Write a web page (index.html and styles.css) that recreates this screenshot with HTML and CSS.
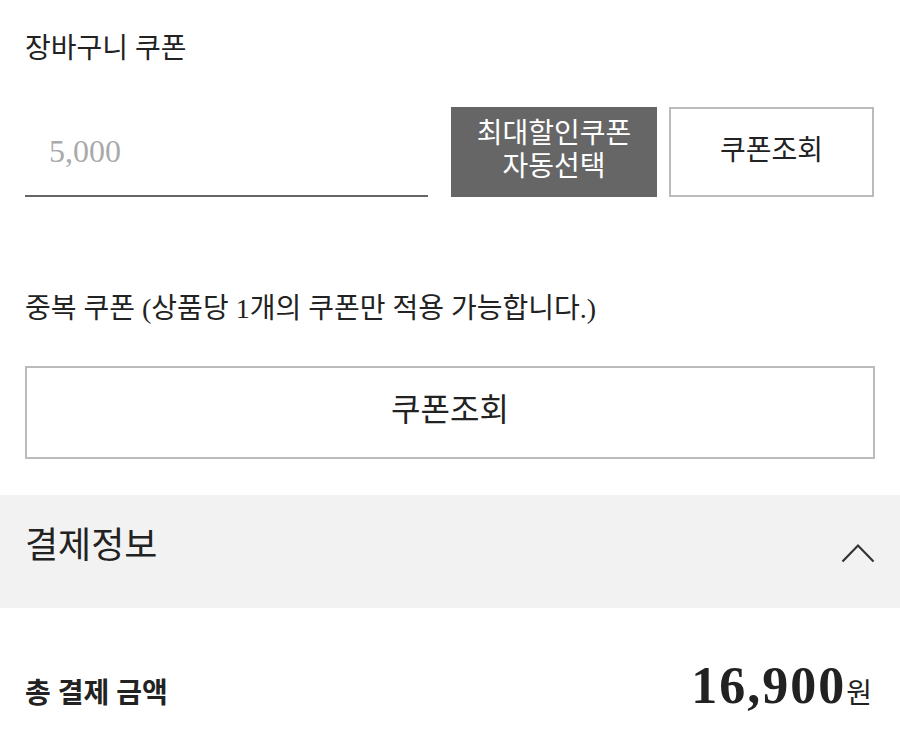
FILE: index.html
```html
<!DOCTYPE html>
<html lang="ko">
  <head>
    <meta charset="utf-8" />
    <meta name="viewport" content="width=device-width, initial-scale=1.0" />
    <title>쿠폰 / 결제정보</title>
    <link rel="stylesheet" href="styles.css">
  </head>
  <body>
    <div class="order-page">
      <section class="coupon-section">
        <h3 class="coupon-label">장바구니 쿠폰</h3>
        <div class="coupon-row">
          <input class="coupon-input" type="text" placeholder="5,000" />
          <button class="btn dark">최대할인쿠폰<br>자동선택</button>
          <button class="btn outline">쿠폰조회</button>
        </div>

        <h3 class="coupon-label dup">중복 쿠폰 (상품당 1개의 쿠폰만 적용 가능합니다.)</h3>
        <button class="btn outline wide">쿠폰조회</button>
      </section>

      <div class="pay-header">
        <h2>결제정보</h2>
        <svg class="chevron" width="34" height="20" viewBox="0 0 34 20" fill="none">
          <path d="M1.5 18.5 L17 2.5 L32.5 18.5" stroke="#333" stroke-width="2.2" />
        </svg>
      </div>

      <div class="total-row">
        <span class="total-label">총 결제 금액</span>
        <span class="total-price">16,900<small>원</small></span>
      </div>
    </div>
  </body>
</html>
```

FILE: styles.css
```css
/* General Reset */
* {
  margin: 0;
  padding: 0;
  box-sizing: border-box;
}

body {
  font-family: "Liberation Serif", "Noto Sans CJK KR", sans-serif;
  background-color: #fff;
  color: #222;
}

/* Coupons */
.coupon-section {
  padding: 31px 25px 0;
}

.coupon-label {
  font-size: 28px;
  font-weight: normal;
  line-height: 36px;
}

.coupon-label.dup {
  margin-top: 94px;
}

.coupon-row {
  display: flex;
  margin-top: 40px;
  height: 90px;
}

.coupon-input {
  width: 403px;
  margin-right: 23px;
  border: none;
  border-bottom: 2px solid #666;
  padding: 0 0 0 24px;
  font-family: "Liberation Serif", serif;
  font-size: 32px;
  color: #333;
  outline: none;
  background: transparent;
}

.coupon-input::placeholder {
  color: #aaa;
}

.btn {
  font-family: "Liberation Serif", "Noto Sans CJK KR", sans-serif;
  font-size: 28px;
  line-height: 33px;
  cursor: pointer;
}

.btn.dark {
  width: 206px;
  margin-right: 12px;
  background-color: #666;
  color: #fff;
  border: none;
  padding-bottom: 4px;
}

.btn.outline {
  width: 205px;
  background-color: #fff;
  color: #222;
  border: 2px solid #bbb;
  padding-bottom: 4px;
}

.btn.wide {
  display: block;
  width: 100%;
  height: 93px;
  margin-top: 39px;
  font-size: 32px;
}

/* Payment info */
.pay-header {
  display: flex;
  justify-content: space-between;
  align-items: center;
  margin-top: 36px;
  height: 113px;
  padding: 0 25px;
  background-color: #f2f2f2;
}

.pay-header h2 {
  font-size: 36px;
  font-weight: normal;
  line-height: 40px;
  margin-top: -12px;
}

.chevron {
  margin-top: 2px;
}

.total-row {
  display: flex;
  justify-content: space-between;
  align-items: baseline;
  padding: 48px 28px 0 25px;
}

.total-label {
  font-size: 28px;
  font-weight: bold;
}

.total-price {
  font-size: 52px;
  font-weight: bold;
  letter-spacing: 2px;
}

.total-price small {
  font-size: 28px;
  font-weight: normal;
  letter-spacing: 0;
}
```
